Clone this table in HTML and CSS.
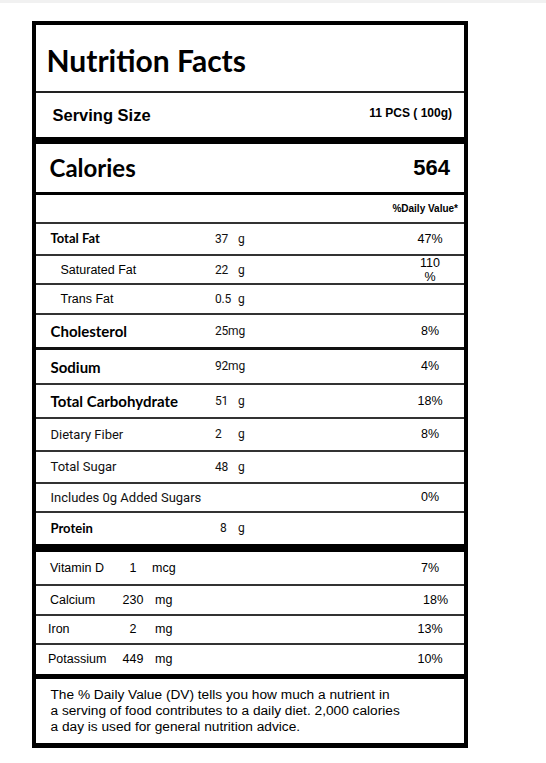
FILE: index.html
```html
<!DOCTYPE html>
<html lang="en">
<head>
<meta charset="utf-8">
<title>Nutrition Facts</title>
<link rel="stylesheet" href="styles.css">
</head>
<body>
<div class="topbar"></div>
<section class="label">
  <header class="title-row"><h1 class="title">Nutrition Facts</h1></header>
  <div class="serving">
    <span class="serving-label">Serving Size</span>
    <span class="serving-value">11 PCS ( 100g)</span>
  </div>
  <div class="calories">
    <span class="cal-label">Calories</span>
    <span class="cal-value">564</span>
  </div>
  <div class="dv-head">%Daily Value*</div>

  <div class="nrow h32"><span class="name name--bold">Total Fat</span><span class="amt"><span class="num">37</span>g</span><span class="dv">47%</span></div>
  <div class="nrow h29 nrow--sub"><span class="name">Saturated Fat</span><span class="amt"><span class="num">22</span>g</span><span class="dv">110<br>%</span></div>
  <div class="nrow h30 nrow--sub"><span class="name">Trans Fat</span><span class="amt"><span class="num">0.5</span>g</span><span class="dv"></span></div>
  <div class="nrow h35 nrow--heavy"><span class="name name--major">Cholesterol</span><span class="amt">25mg</span><span class="dv">8%</span></div>
  <div class="nrow h35"><span class="name name--major">Sodium</span><span class="amt">92mg</span><span class="dv">4%</span></div>
  <div class="nrow h34"><span class="name name--major">Total Carbohydrate</span><span class="amt"><span class="num">51</span>g</span><span class="dv">18%</span></div>
  <div class="nrow h33"><span class="name name--plain">Dietary Fiber</span><span class="amt"><span class="num">2</span>g</span><span class="dv">8%</span></div>
  <div class="nrow h32"><span class="name name--plain">Total Sugar</span><span class="amt"><span class="num">48</span>g</span><span class="dv"></span></div>
  <div class="nrow h29"><span class="name name--plain name--wide">Includes 0g Added Sugars</span><span class="dv">0%</span></div>
  <div class="nrow nrow--end"><span class="name name--bold">Protein</span><span class="amt"><span class="num num--pad">8</span>g</span><span class="dv"></span></div>

  <div class="vrow h34"><span class="vname">Vitamin D</span><span class="vnum">1</span><span class="vunit vunit--narrow">mcg</span><span class="dv">7%</span></div>
  <div class="vrow h30"><span class="vname">Calcium</span><span class="vnum">230</span><span class="vunit">mg</span><span class="dv dv--shift">18%</span></div>
  <div class="vrow h29"><span class="vname vname--out">Iron</span><span class="vnum">2</span><span class="vunit">mg</span><span class="dv">13%</span></div>
  <div class="vrow vrow--end"><span class="vname vname--out">Potassium</span><span class="vnum">449</span><span class="vunit">mg</span><span class="dv">10%</span></div>

  <p class="note">The % Daily Value (DV) tells you how much a nutrient in<br>a serving of food contributes to a daily diet. 2,000 calories<br>a day is used for general nutrition advice.</p>
</section>
</body>
</html>
```

FILE: styles.css
```css
* {
  box-sizing: border-box;
  margin: 0;
  padding: 0;
}

body {
  margin: 0;
  background: #fff;
  color: #000;
  font-family: "Liberation Sans", Arial, sans-serif;
}

.topbar {
  height: 3px;
  background: #f1f1f1;
}

.label {
  width: 436px;
  margin: 18px 0 0 32px;
  border: 4px solid #000;
  border-bottom-width: 5px;
}

.title-row {
  height: 68px;
  display: flex;
  align-items: center;
  padding: 4px 0 0 10.5px;
  border-bottom: 2px solid #222;
}

.title {
  font: 700 30px/1.2 Lato, sans-serif;
}

.serving {
  height: 51px;
  display: flex;
  align-items: center;
  justify-content: space-between;
  padding: 0 12px 0 16.5px;
  border-bottom: 7px solid #000;
}

.serving-label {
  font: 700 16.5px/1.2 "Liberation Sans", Arial, sans-serif;
  margin-top: 2px;
}

.serving-value {
  font: 700 12px/1.2 "Liberation Sans", Arial, sans-serif;
  margin-bottom: 3px;
}

.calories {
  height: 51px;
  display: flex;
  align-items: center;
  justify-content: space-between;
  padding: 0 14px 0 13.5px;
  border-bottom: 3px solid #000;
}

.cal-label {
  font: 700 24px/1.2 Lato, sans-serif;
}

.cal-value {
  font: 700 22px/1.2 "Liberation Sans", Arial, sans-serif;
}

.dv-head {
  height: 29px;
  display: flex;
  align-items: center;
  justify-content: flex-end;
  padding-right: 6px;
  font: 700 10px/1.2 "Liberation Sans", Arial, sans-serif;
  border-bottom: 2px solid #333;
}

.nrow {
  display: grid;
  grid-template-columns: 164.5px 1fr 30px;
  align-items: center;
  padding: 0 19px 0 14.5px;
  border-bottom: 2px solid #333;
}

.nrow--sub .name {
  padding-left: 10px;
}

.nrow--heavy {
  border-bottom-width: 3px;
  border-bottom-color: #111;
}

.nrow--end {
  height: 39px;
  border-bottom: 8px solid #000;
}

.h29 { height: 29px; }
.h30 { height: 30px; }
.h32 { height: 32px; }
.h33 { height: 33px; }
.h34 { height: 34px; }
.h35 { height: 35px; }

.name {
  font: 12.5px/1.2 "Liberation Sans", Arial, sans-serif;
}

.name--bold {
  font: 700 13px/1.2 Lato, sans-serif;
}

.name--major {
  font: 700 15px/1.2 Lato, sans-serif;
}

.name--plain {
  font: 13px/1.2 Roboto, sans-serif;
  color: #111;
}

.name--wide {
  grid-column: 1 / 3;
}

.amt {
  font: 12px/1.2 Roboto, sans-serif;
  letter-spacing: -0.2px;
  color: #111;
}

.num {
  display: inline-block;
  width: 23px;
}

.num--pad {
  padding-left: 5px;
}

.dv {
  grid-column: 3;
  font: 12.5px/14.4px "Liberation Sans", Arial, sans-serif;
  text-align: center;
  white-space: nowrap;
}

.vrow {
  display: grid;
  grid-template-columns: 68px 30px 1fr 30px;
  align-items: center;
  padding: 0 19px 0 14px;
  border-bottom: 2px solid #333;
  font: 12.5px/1.2 "Liberation Sans", Arial, sans-serif;
}

.vrow .dv {
  grid-column: 4;
}

.vrow--end {
  height: 34px;
  border-bottom: 5px solid #000;
}

.vname--out {
  margin-left: -2px;
}

.vnum {
  text-align: center;
}

.vunit {
  padding-left: 7px;
}

.vunit--narrow {
  padding-left: 4px;
}

.dv--shift {
  padding-left: 8px;
}

.note {
  height: 64px;
  padding: 8px 14.5px;
  font: 13.7px/16px "Liberation Sans", Arial, sans-serif;
}
```
